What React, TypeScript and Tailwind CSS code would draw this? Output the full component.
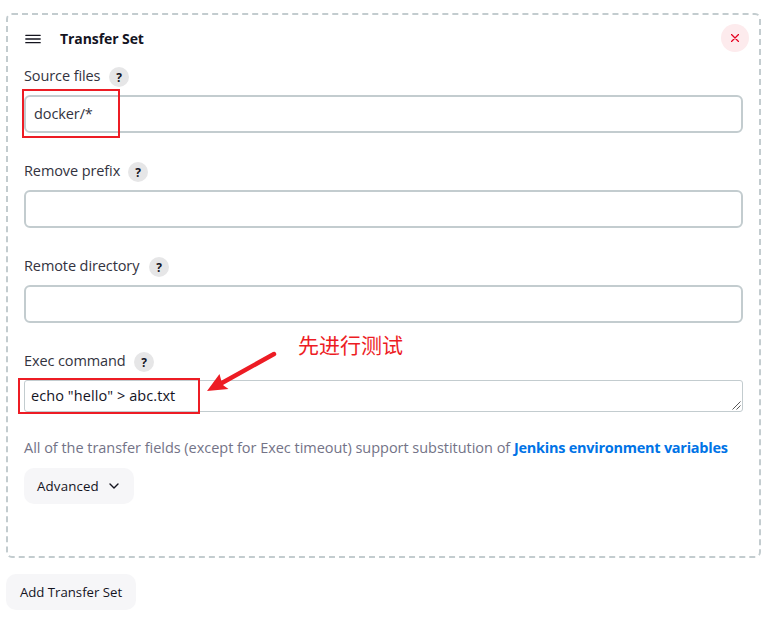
import type { ReactNode } from "react";

function Help() {
  return (
    <span className="flex h-5 w-5 items-center justify-center rounded-full bg-[#e6e6e7] text-[12px] font-bold text-[#14141f]">
      <span className="relative top-px">?</span>
    </span>
  );
}

function Field({ label, width, children }: { label: string; width: string; children: ReactNode }) {
  return (
    <div className="mb-[29px]">
      <div className="mb-2 flex h-5 items-center">
        <span className={`${width} relative -top-px whitespace-nowrap leading-5 tracking-[-0.1px]`}>{label}</span>
        <Help />
      </div>
      {children}
    </div>
  );
}

const inputClass =
  "block h-[38px] w-full rounded-md border-2 border-[#c3cccf] bg-white px-2 pb-[2px] leading-[30px] tracking-[-0.1px] outline-none";

export default function App() {
  return (
    <div className="relative h-[619px] w-[777px] overflow-hidden bg-white pl-[6px] pt-[13px] font-['Open_Sans','Noto_Sans_CJK_SC',sans-serif] text-[14.5px] text-[#333340]">
      <section className="h-[545px] w-[755px] rounded-[6px] border-2 border-dashed border-[#c3cccf] px-4">
        <header className="flex h-[52px] items-start justify-between pt-[9px]">
          <div className="flex h-7 items-center">
            <svg className="ml-[1px] h-4 w-4" viewBox="0 0 16 16" stroke="#14141f" fill="none">
              <path d="M.8 5.3h14.4M.8 9h14.4M.8 12.7h14.4" strokeWidth="1.3" strokeLinecap="round" />
            </svg>
            <h2 className="ml-[19px] text-[14px] font-bold tracking-[-0.08px] text-[#14141f]">Transfer Set</h2>
          </div>
          <button className="-mr-[6px] flex h-7 w-7 items-center justify-center rounded-full bg-[#fdebed]">
            <svg className="h-2 w-2" viewBox="0 0 8 8" stroke="#e6001f" fill="none">
              <path d="m.5.5 7 7m0-7-7 7" strokeWidth="1.25" strokeLinecap="round" />
            </svg>
          </button>
        </header>

        <Field label="Source files" width="w-[85px]">
          <input className={inputClass} defaultValue="docker/*" />
        </Field>
        <Field label="Remove prefix" width="w-[104px]">
          <input className={inputClass} />
        </Field>
        <Field label="Remote directory" width="w-[125px]">
          <input className={inputClass} />
        </Field>
        <Field label="Exec command" width="w-[110px]">
          <div className="relative h-8 rounded-[3px] border border-[#c3cccf] px-[6px] leading-[30px] tracking-[0.08px] text-[#14141f]">
            echo "hello" &gt; abc.txt
            <svg className="absolute bottom-px right-px h-[9px] w-[9px]" viewBox="0 0 9 9" stroke="#444" fill="none">
              <path d="m.5 8.5 8-8m-4 8 4-4" strokeWidth="0.9" />
            </svg>
          </div>
        </Field>

        <p className="-mt-[5px] flex h-6 items-center whitespace-nowrap text-[#737387]">
          <span className="w-[490px] tracking-[-0.03px]">
            All of the transfer fields (except for Exec timeout) support substitution of
          </span>
          <a className="font-bold tracking-[-0.26px] text-[#0073e6]">Jenkins environment variables</a>
        </p>
        <button className="mt-2 flex h-9 w-[110px] items-center rounded-[10px] bg-[#f6f6f8] pl-[13px] text-[13.3px] text-[#14141f]">
          <span className="relative top-px w-[71px] text-left tracking-[0.15px]">Advanced</span>
          <svg className="h-3 w-3" viewBox="0 0 12 12" stroke="#14141f" fill="none">
            <path d="m2 4 4 4 4-4" strokeWidth="1.4" strokeLinecap="round" strokeLinejoin="round" />
          </svg>
        </button>
      </section>
      <button className="mt-4 flex h-9 w-[130px] items-center justify-center whitespace-nowrap rounded-[10px] bg-[#f6f6f8] text-[13.2px] text-[#14141f]">
        <span className="relative top-px">Add Transfer Set</span>
      </button>

      <div className="absolute left-[22px] top-[89px] h-[49px] w-[98px] border-2 border-[#ed1c24]" />
      <div className="absolute left-[18px] top-[378px] h-[36px] w-[182px] border-2 border-[#ed1c24]" />
      <svg className="absolute left-[200px] top-[345px] h-[52px] w-[84px]" viewBox="200 345 84 52">
        <path d="M274 354 221 383.5" stroke="#ed1c24" strokeWidth="4.5" strokeLinecap="round" />
        <path d="m207 391 12.5-17 2 7.5 2 4 5 3.5Z" fill="#ed1c24" />
      </svg>
      <div className="absolute left-[298px] top-[329px] whitespace-nowrap font-['Noto_Sans_CJK_SC',sans-serif] text-[21px] leading-[30px] text-[#ed1c24]">
        先进行测试
      </div>
    </div>
  );
}
